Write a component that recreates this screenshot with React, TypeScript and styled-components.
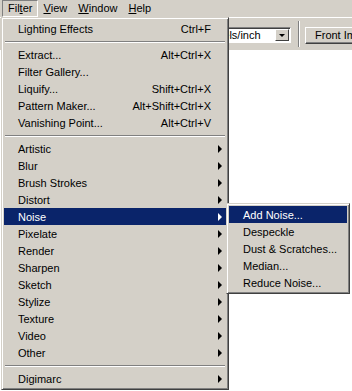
import React from "react";
import styled, { createGlobalStyle } from "styled-components";

const GlobalStyle = createGlobalStyle`
html, body {
  margin: 0;
  padding: 0;
  background: #ffffff;
}
body {
  font-family: "Liberation Sans", Arial, sans-serif;
  font-size: 11px;
  color: #000000;
}
`;

const Screen = styled.div`
position: relative;
width: 352px;
height: 391px;
overflow: hidden;
background: #ffffff;
display: flex;
flex-direction: column;
`;

const MenuBar = styled.div`
display: flex;
align-items: stretch;
height: 17px;
padding-left: 2px;
background: #d4d0c8;
`;

const BarItem = styled.div<{ $open?: boolean }>`
display: flex;
align-items: center;
padding: 0 5px 0 5px;
margin-right: -1px;
line-height: 15px;
border: 1px solid transparent;
${(p) =>
  p.$open &&
  `
  border-color: #808080 #ffffff #ffffff #808080;
`}
`;

const OptionsBar = styled.div`
display: flex;
align-items: flex-start;
height: 33px;
box-sizing: border-box;
padding: 9px 0 0 201px;
background: #d4d0c8;
border-top: 1px solid #ffffff;
overflow: hidden;
& > * {
  flex-shrink: 0;
}
`;

const UnitSelect = styled.div`
display: flex;
align-items: center;
width: 90px;
height: 16px;
box-sizing: border-box;
background: #ffffff;
border: 1px solid;
border-color: #808080 #ffffff #ffffff #808080;
box-shadow: inset 1px 1px 0 #404040;
`;

const SelectText = styled.span`
flex: 1;
padding-left: 6px;
line-height: 14px;
white-space: nowrap;
overflow: hidden;
`;

const DropButton = styled.span`
display: flex;
align-items: center;
justify-content: center;
width: 14px;
height: 12px;
margin-right: 1px;
background: #d4d0c8;
border: 1px solid;
border-color: #ffffff #404040 #404040 #ffffff;
box-sizing: border-box;
&::after {
  content: "";
  border-top: 3px solid #000;
  border-left: 3px solid transparent;
  border-right: 3px solid transparent;
  margin-top: 1px;
}
`;

const ToolSep = styled.div`
width: 1px;
height: 26px;
margin: -6px 5px 0 7px;
background: #808080;
border-right: 1px solid #ffffff;
`;

const ToolButton = styled.div`
height: 17px;
box-sizing: border-box;
padding: 0 9px;
line-height: 15px;
white-space: nowrap;
background: #d4d0c8;
border: 1px solid;
border-color: #ffffff #404040 #404040 #ffffff;
box-shadow: inset -1px -1px 0 #808080;
`;

const Workspace = styled.div`
flex: 1;
background: #ffffff;
`;

const Popup = styled.div<{ $left: number; $top: number; $width: number }>`
position: absolute;
left: ${(p) => p.$left}px;
top: ${(p) => p.$top}px;
width: ${(p) => p.$width}px;
box-sizing: border-box;
padding: 2px;
background: #d4d0c8;
border: 1px solid;
border-color: #d4d0c8 #404040 #404040 #d4d0c8;
box-shadow: inset 1px 1px 0 #ffffff, inset -1px -1px 0 #808080;
`;

const Row = styled.div<{ $active?: boolean }>`
display: grid;
grid-template-columns: 1fr auto 15px;
align-items: center;
height: 17px;
box-sizing: border-box;
padding: 1px 0 0 14px;
line-height: 16px;
white-space: nowrap;
background: ${(p) => (p.$active ? "#0a246a" : "transparent")};
color: ${(p) => (p.$active ? "#ffffff" : "#000000")};
`;

const SubRow = styled(Row)`
grid-template-columns: 1fr;
`;

const Shortcut = styled.span`
text-align: right;
`;

const Arrow = styled.span<{ $active?: boolean }>`
justify-self: start;
margin-left: 7px;
width: 0;
height: 0;
border-left: 4px solid ${(p) => (p.$active ? "#ffffff" : "#000000")};
border-top: 4px solid transparent;
border-bottom: 4px solid transparent;
`;

const Separator = styled.div`
height: 9px;
margin: 0 1px;
display: flex;
flex-direction: column;
justify-content: center;
&::before {
  content: "";
  height: 1px;
  background: #808080;
  border-bottom: 1px solid #ffffff;
}
`;

type Entry =
  | { label: string; shortcut?: string; sub?: boolean; active?: boolean }
  | "sep";

const filterMenu: Entry[] = [
  { label: "Lighting Effects", shortcut: "Ctrl+F" },
  "sep",
  { label: "Extract...", shortcut: "Alt+Ctrl+X" },
  { label: "Filter Gallery..." },
  { label: "Liquify...", shortcut: "Shift+Ctrl+X" },
  { label: "Pattern Maker...", shortcut: "Alt+Shift+Ctrl+X" },
  { label: "Vanishing Point...", shortcut: "Alt+Ctrl+V" },
  "sep",
  { label: "Artistic", sub: true },
  { label: "Blur", sub: true },
  { label: "Brush Strokes", sub: true },
  { label: "Distort", sub: true },
  { label: "Noise", sub: true, active: true },
  { label: "Pixelate", sub: true },
  { label: "Render", sub: true },
  { label: "Sharpen", sub: true },
  { label: "Sketch", sub: true },
  { label: "Stylize", sub: true },
  { label: "Texture", sub: true },
  { label: "Video", sub: true },
  { label: "Other", sub: true },
  "sep",
  { label: "Digimarc", sub: true },
];

const noiseMenu = [
  "Add Noise...",
  "Despeckle",
  "Dust & Scratches...",
  "Median...",
  "Reduce Noise...",
];

function App() {
  return (
    <Screen>
      <GlobalStyle />
      <MenuBar>
        <BarItem $open>
          Fil<u>t</u>er
        </BarItem>
        <BarItem>
          <u>V</u>iew
        </BarItem>
        <BarItem>
          <u>W</u>indow
        </BarItem>
        <BarItem>
          <u>H</u>elp
        </BarItem>
      </MenuBar>
      <OptionsBar>
        <UnitSelect>
          <SelectText>Pixels/inch</SelectText>
          <DropButton />
        </UnitSelect>
        <ToolSep />
        <ToolButton>Front Image</ToolButton>
      </OptionsBar>
      <Workspace />

      <Popup $left={1} $top={17} $width={228}>
        {filterMenu.map((item, i) =>
          item === "sep" ? (
            <Separator key={i} />
          ) : (
            <Row key={i} $active={item.active}>
              <span>{item.label}</span>
              <Shortcut>{item.shortcut}</Shortcut>
              {item.sub ? <Arrow $active={item.active} /> : <span />}
            </Row>
          )
        )}
      </Popup>

      <Popup $left={226} $top={203} $width={124}>
        {noiseMenu.map((label, i) => (
          <SubRow key={label} $active={i === 0}>
            <span>{label}</span>
          </SubRow>
        ))}
      </Popup>
    </Screen>
  );
}

export default App;
